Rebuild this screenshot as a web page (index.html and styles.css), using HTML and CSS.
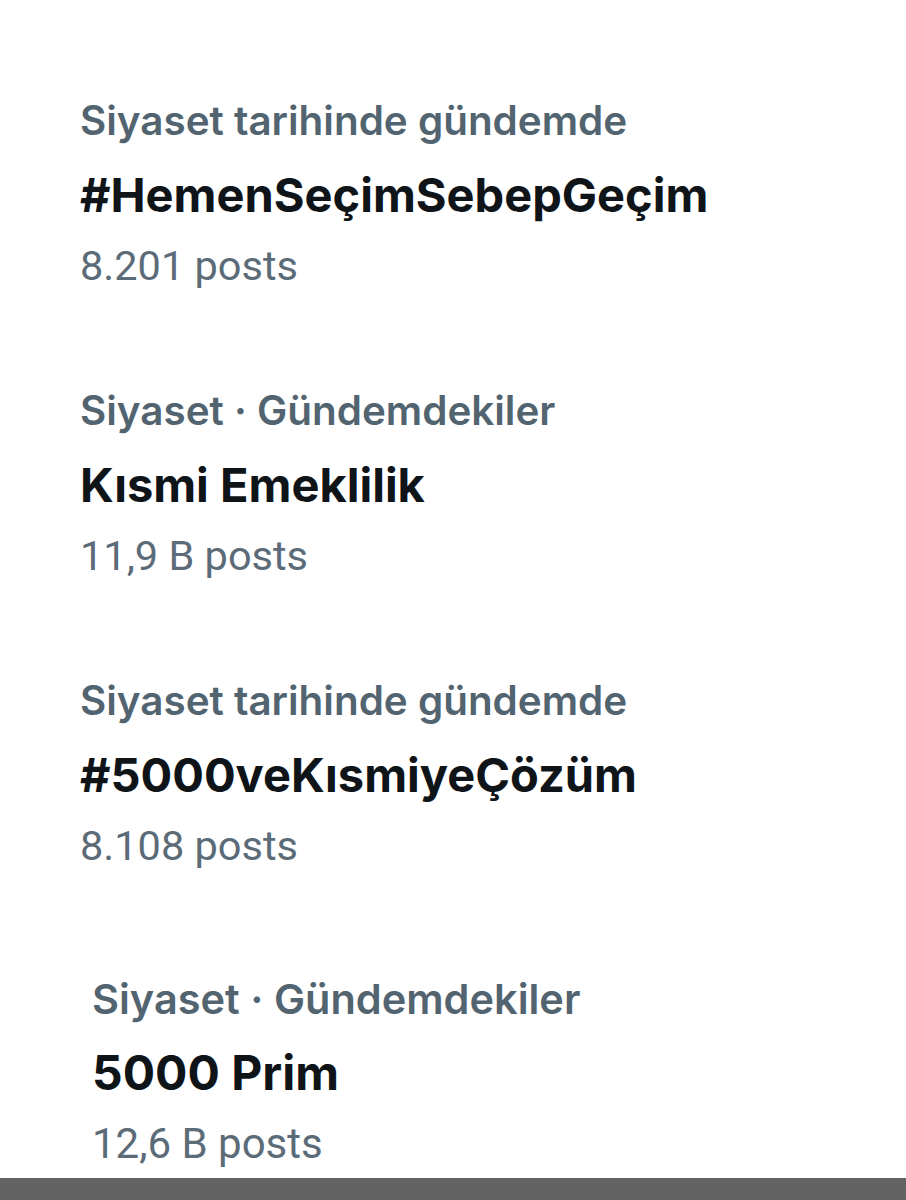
FILE: index.html
```html
<!DOCTYPE html>
<html>
<head>
  <meta charset="utf-8" />
  <title>Gündem</title>
  <link rel="stylesheet" href="styles.css">
</head>
<body>
  <div class="trends">
    <div class="trend">
      <div class="trend-meta">Siyaset tarihinde gündemde</div>
      <div class="trend-title">#HemenSeçimSebepGeçim</div>
      <div class="trend-count">8.201 posts</div>
    </div>

    <div class="trend">
      <div class="trend-meta">Siyaset · Gündemdekiler</div>
      <div class="trend-title">Kısmi Emeklilik</div>
      <div class="trend-count">11,9 B posts</div>
    </div>

    <div class="trend">
      <div class="trend-meta">Siyaset tarihinde gündemde</div>
      <div class="trend-title">#5000veKısmiyeÇözüm</div>
      <div class="trend-count">8.108 posts</div>
    </div>

    <div class="trend trend-last">
      <div class="trend-meta">Siyaset · Gündemdekiler</div>
      <div class="trend-title">5000 Prim</div>
      <div class="trend-count">12,6 B posts</div>
    </div>
  </div>
  <div class="bottom-bar"></div>
</body>
</html>
```

FILE: styles.css
```css
body {
  margin: 0;
  padding: 0;
  background: #ffffff;
  font-family: Roboto, "Noto Sans", sans-serif;
  height: 1200px;
  overflow: hidden;
  display: flex;
  flex-direction: column;
}

.trends {
  flex: 1;
  display: flex;
  flex-direction: column;
  gap: 97px;
  padding: 97px 0 0 80px;
}

.trend-meta {
  font-family: Inter, Roboto, sans-serif;
  font-size: 40.4px;
  line-height: 48px;
  font-weight: 600;
  color: #536471;
}

.trend-title {
  margin-top: 20px;
  font-family: Inter, Roboto, sans-serif;
  font-size: 47px;
  line-height: 60px;
  font-weight: 700;
  color: #0f1419;
}

.trend-count {
  margin-top: 17px;
  font-size: 41.5px;
  line-height: 48px;
  color: #5b6b78;
}

.trend-last {
  margin-top: 8px;
  padding-left: 12px;
}

.trend-last .trend-meta {
  font-size: 41.5px;
}

.trend-last .trend-title {
  font-size: 48px;
}

.trend-last .trend-count {
  font-size: 42px;
}

.bottom-bar {
  height: 22px;
  background: #636363;
}
```
